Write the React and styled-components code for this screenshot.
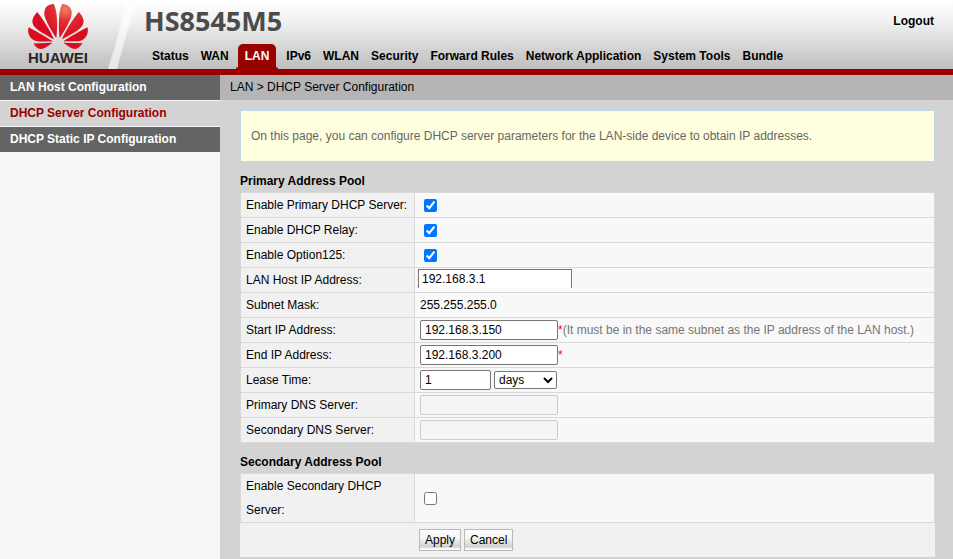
import React, { useState } from "react";
import styled, { createGlobalStyle } from "styled-components";

const GlobalStyle = createGlobalStyle`
  *, *::before, *::after { box-sizing: border-box; }
  html { background: #d3d3d3; }
  body {
    margin: 0;
    color: #000;
    font-family: "Liberation Sans", Arial, sans-serif;
    font-size: 12px;
    line-height: 24px;
  }
  input, select, button { font: inherit; color: inherit; }
`;

const Page = styled.div`
  display: flex;
  flex-direction: column;
  min-height: 100vh;
`;

const Header = styled.header`
  display: flex;
  align-items: flex-start;
  background: linear-gradient(#fff 0, #f2f2f2 20px, #bebebe 69px);
  border-bottom: 6px solid #900;
`;

const Brand = styled.div`
  display: flex;
  flex-direction: column;
  align-items: center;
  width: 60px;
  margin: 4px 19px 0 28px;
`;

const BrandName = styled.span`
  color: #2b2523;
  font: 700 15px/18px "Liberation Sans", Arial, sans-serif;
`;

const HeaderBody = styled.div`
  flex: 1;
  display: flex;
  flex-direction: column;
`;

const TitleBar = styled.div`
  display: flex;
  justify-content: space-between;
  height: 44px;
  padding: 0 19px 0 7px;
`;

const Product = styled.h1`
  margin: 0;
  color: #4b4b4b;
  font: 700 27px/42px "Noto Sans", sans-serif;
`;

const Logout = styled.a`
  color: #000;
  font-weight: 700;
  line-height: 42px;
  text-decoration: none;
`;

const Nav = styled.nav`
  display: flex;
  height: 25px;
  padding-left: 9px;
`;

const NavLink = styled.a`
  position: relative;
  margin: ${(p) => (p.$active ? "0 4px 0 3px" : "0")};
  padding: 0 ${(p) => (p.$active ? "7px" : "6px")};
  border-radius: 5px 5px 0 0;
  background: ${(p) => (p.$active ? "#900" : "transparent")};
  color: ${(p) => (p.$active ? "#fff" : "#000")};
  font-weight: 700;
  line-height: 24px;
  text-decoration: none;
  white-space: nowrap;

  &::before {
    content: ${(p) => (p.$active ? '""' : "none")};
    position: absolute;
    right: -2px;
    bottom: 0;
    left: -2px;
    height: 2px;
    border-radius: 2px 2px 0 0;
    background: #900;
  }
`;

const Columns = styled.div`
  flex: 1;
  display: flex;
`;

const Sidebar = styled.nav`
  flex: none;
  display: flex;
  flex-direction: column;
  gap: 1px;
  width: 220px;
  background: #f6f6f6;
`;

const SideLink = styled.a`
  height: 25px;
  padding-left: 10px;
  background: ${(p) => (p.$active ? "#d3d3d3" : "#646464")};
  color: ${(p) => (p.$active ? "#900" : "#fff")};
  font-weight: 700;
  line-height: 24px;
  text-decoration: none;
`;

const Content = styled.main`
  flex: 1;
  min-width: 0;
  background: #d3d3d3;
`;

const Breadcrumb = styled.div`
  height: 25px;
  padding-left: 10px;
  background: #b5b5b5;
`;

const Form = styled.form`
  padding: 10px 18px 0 20px;
`;

const Notice = styled.p`
  margin: 0 0 9px;
  padding: 13px 10px;
  border: 1px solid #bfd9e6;
  background: #ffffe0;
  color: #666;
`;

const SectionTitle = styled.h2`
  margin: 0;
  font-size: 12px;
  line-height: 21px;
`;

const Table = styled.table`
  width: 100%;
  margin-bottom: ${(p) => (p.$spaced ? "9px" : "0")};
  border-collapse: collapse;
  table-layout: fixed;
  border: 1px solid #d8d8d8;
`;

const Row = styled.tr`
  height: 25px;
  border-bottom: 1px solid #d8d8d8;
`;

const LabelCell = styled.th`
  width: 174px;
  padding: 0 5px;
  border-right: 1px solid #d8d8d8;
  background: #f1f1f1;
  font-weight: 400;
  text-align: left;
`;

const FieldCell = styled.td`
  padding: 0 5px;
  background: #f8f8f8;
`;

const Line = styled.div`
  display: flex;
  align-items: center;
  gap: ${(p) => (p.$gap ? "3px" : "0")};
  height: 24px;
`;

const CheckBox = styled.input`
  display: block;
  width: 13px;
  height: 13px;
  margin: 0 4px;
  accent-color: #0075ff;
`;

const TextBox = styled.input`
  width: ${(p) => (p.$short ? "71px" : "138px")};
  height: 20px;
  padding: 0 4px;
  border: 1px solid #767676;
  border-radius: 2px;
  background: #fff;
  line-height: 18px;

  &:disabled {
    border-color: #ccc;
    background: #f5f5f5;
  }
`;

const HostBox = styled(TextBox)`
  align-self: flex-start;
  width: 154px;
  height: 19px;
  margin: 1px -2px 0;
  padding: 0 3px;
  border-bottom: 0;
  border-radius: 0;
`;

const Unit = styled.select`
  width: 63px;
  height: 18px;
  padding: 0;
  border: 1px solid #767676;
  border-radius: 2px;
  background: #fff;
  line-height: 16px;
`;

const Required = styled.span`
  color: #f03;
`;

const Hint = styled.span`
  color: #767676;
`;

const Actions = styled.div`
  display: flex;
  gap: 3px;
  padding: 6px 0 6px 179px;
  background: #f1f1f1;
`;

const ActionButton = styled.button`
  height: 22px;
  padding: 0 5px;
  border: 1px solid #b9b9b9;
  background: linear-gradient(#fff 0, #f4f4f4 40%, #d0d0d0 85%, #fff 95%);
  line-height: 18px;
`;

const tabs = [
  "Status", "WAN", "LAN", "IPv6", "WLAN", "Security",
  "Forward Rules", "Network Application", "System Tools", "Bundle",
];

const pages = [
  "LAN Host Configuration",
  "DHCP Server Configuration",
  "DHCP Static IP Configuration",
];

function Petals() {
  return (
    <svg width="60" height="45" viewBox="0 2.96 24 18.08" aria-hidden="true">
      <defs>
        <radialGradient id="petal" gradientUnits="userSpaceOnUse" cx="15" cy="5" r="11">
          <stop offset="0" stopColor="#ee8062" />
          <stop offset="0.45" stopColor="#df3034" />
          <stop offset="1" stopColor="#dc0b20" />
        </radialGradient>
      </defs>
      <path
        fill="url(#petal)"
        d="M3.67 6.14S1.82 7.91 1.72 9.78v.35c.08 1.51 1.22 2.4 1.22 2.4 1.83 1.79 6.26 4.04 7.3 4.55 0 0 .06.03.1-.01l.02-.04v-.04C7.52 10.8 3.67 6.14 3.67 6.14zM9.65 18.6c-.02-.08-.1-.08-.1-.08l-7.38.26c.8 1.43 2.15 2.53 3.56 2.2.96-.25 3.16-1.78 3.88-2.3.06-.05.04-.09.04-.09zm.08-.78C6.49 15.63.21 12.28.21 12.28c-.15.46-.2.9-.21 1.3v.07c0 1.07.4 1.82.4 1.82.8 1.69 2.34 2.2 2.34 2.2.7.3 1.4.31 1.4.31.12.02 4.4 0 5.54 0 .05 0 .08-.05.08-.05v-.06c0-.03-.03-.05-.03-.05zM9.06 3.19a3.42 3.42 0 0 0-2.57 3.15v.41c.03.6.16 1.05.16 1.05.66 2.9 3.86 7.65 4.55 8.65.05.05.1.03.1.03a.1.1 0 0 0 .06-.1c1.06-10.6-1.11-13.42-1.11-13.42-.32.02-1.19.23-1.19.23zm8.299 2.27s-.49-1.8-2.44-2.28c0 0-.57-.14-1.17-.22 0 0-2.18 2.81-1.12 13.43.01.07.06.08.06.08.07.03.1-.03.1-.03.72-1.03 3.9-5.76 4.55-8.64 0 0 .36-1.4.02-2.34zm-2.92 13.07s-.07 0-.09.05c0 0-.01.07.03.1.7.51 2.85 2 3.88 2.3 0 0 .16.05.43.06h.14c.69-.02 1.9-.37 3-2.26l-7.4-.25zm7.83-8.41c.14-2.06-1.94-3.97-1.94-3.98 0 0-3.85 4.66-6.67 10.8 0 0-.03.08.02.13l.04.01h.06c1.06-.53 5.46-2.77 7.28-4.54 0 0 1.15-.93 1.21-2.42zm1.52 2.14s-6.28 3.37-9.52 5.55c0 0-.05.04-.03.11 0 0 .03.06.07.06 1.16 0 5.56 0 5.67-.02 0 0 .57-.02 1.27-.29 0 0 1.56-.5 2.37-2.27 0 0 .73-1.45.17-3.14z"
      />
    </svg>
  );
}

function Swoosh() {
  return (
    <svg width="30" height="69" viewBox="0 0 30 69" aria-hidden="true">
      <path d="M19 0H30Q20 30 10 69H1Q13 32 19 0Z" fill="#fff" fillOpacity="0.62" />
    </svg>
  );
}

function Field({ label, id, gap, children }) {
  return (
    <Row>
      <LabelCell scope="row"><label htmlFor={id}>{label}</label></LabelCell>
      <FieldCell><Line $gap={gap}>{children}</Line></FieldCell>
    </Row>
  );
}

export default function App() {
  const [unit, setUnit] = useState("days");
  return (
    <>
      <GlobalStyle />
      <Page>
        <Header>
          <Brand>
            <Petals />
            <BrandName>HUAWEI</BrandName>
          </Brand>
          <Swoosh />
          <HeaderBody>
            <TitleBar>
              <Product>HS8545M5</Product>
              <Logout href="#logout">Logout</Logout>
            </TitleBar>
            <Nav>
              {tabs.map((t) => (
                <NavLink key={t} href="#tab" $active={t === "LAN"}>{t}</NavLink>
              ))}
            </Nav>
          </HeaderBody>
        </Header>
        <Columns>
          <Sidebar>
            {pages.map((p, i) => (
              <SideLink key={p} href="#page" $active={i === 1}>{p}</SideLink>
            ))}
          </Sidebar>
          <Content>
            <Breadcrumb>LAN &gt; DHCP Server Configuration</Breadcrumb>
            <Form onSubmit={(e) => e.preventDefault()}>
              <Notice>
                On this page, you can configure DHCP server parameters for the LAN-side device to obtain IP addresses.
              </Notice>
              <SectionTitle>Primary Address Pool</SectionTitle>
              <Table $spaced>
                <tbody>
                  <Field label="Enable Primary DHCP Server:" id="primary">
                    <CheckBox id="primary" type="checkbox" defaultChecked />
                  </Field>
                  <Field label="Enable DHCP Relay:" id="relay">
                    <CheckBox id="relay" type="checkbox" defaultChecked />
                  </Field>
                  <Field label="Enable Option125:" id="option125">
                    <CheckBox id="option125" type="checkbox" defaultChecked />
                  </Field>
                  <Field label="LAN Host IP Address:" id="host">
                    <HostBox id="host" defaultValue="192.168.3.1" />
                  </Field>
                  <Field label="Subnet Mask:">255.255.255.0</Field>
                  <Field label="Start IP Address:" id="start">
                    <TextBox id="start" defaultValue="192.168.3.150" />
                    <Required>*</Required>
                    <Hint>(It must be in the same subnet as the IP address of the LAN host.)</Hint>
                  </Field>
                  <Field label="End IP Address:" id="end">
                    <TextBox id="end" defaultValue="192.168.3.200" />
                    <Required>*</Required>
                  </Field>
                  <Field label="Lease Time:" id="lease" gap>
                    <TextBox id="lease" $short defaultValue="1" />
                    <Unit aria-label="Lease time unit" value={unit} onChange={(e) => setUnit(e.target.value)}>
                      <option>minutes</option>
                      <option>hours</option>
                      <option>days</option>
                      <option>weeks</option>
                    </Unit>
                  </Field>
                  <Field label="Primary DNS Server:" id="dns1">
                    <TextBox id="dns1" disabled />
                  </Field>
                  <Field label="Secondary DNS Server:" id="dns2">
                    <TextBox id="dns2" disabled />
                  </Field>
                </tbody>
              </Table>
              <SectionTitle>Secondary Address Pool</SectionTitle>
              <Table>
                <tbody>
                  <Field label="Enable Secondary DHCP Server:" id="secondary">
                    <CheckBox id="secondary" type="checkbox" />
                  </Field>
                </tbody>
              </Table>
              <Actions>
                <ActionButton type="submit">Apply</ActionButton>
                <ActionButton type="reset">Cancel</ActionButton>
              </Actions>
            </Form>
          </Content>
        </Columns>
      </Page>
    </>
  );
}
